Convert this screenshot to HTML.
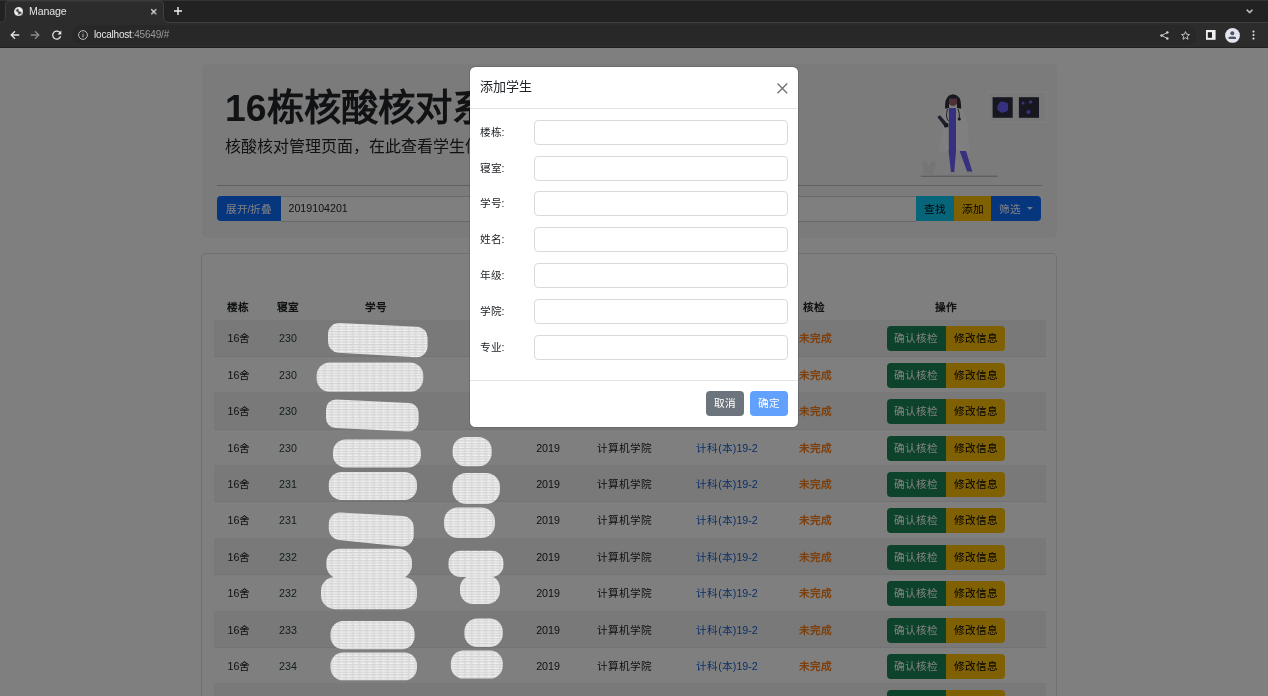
<!DOCTYPE html>
<html lang="zh-CN">
<head>
<meta charset="utf-8">
<style>
*{box-sizing:border-box;margin:0;padding:0}
html,body{width:1268px;height:696px;overflow:hidden;background:#fff;font-family:"Liberation Sans",sans-serif;color:#212529}
/* browser chrome */
#chrome{position:absolute;left:0;top:0;width:1268px;height:48px;background:#222222}
#tabtop{position:absolute;left:0;top:0;width:1268px;height:1px;background:#333}
#stripline{position:absolute;left:0;top:22px;width:1268px;height:1px;background:#3a3a3a}
#toolbar{position:absolute;left:0;top:23px;width:1268px;height:24px;background:#2c2c2c}
#tbline{position:absolute;left:0;top:47px;width:1268px;height:1px;background:#202020}
#omni{position:absolute;left:72px;top:25px;width:1124px;height:20px;border-radius:10px;background:#282828}
.ctext{position:absolute;font-size:11px;color:#e3e3e3;white-space:nowrap}
svg{position:absolute;overflow:visible}
body *{will-change:transform}
/* page */
#page{position:absolute;left:0;top:48px;width:1268px;height:648px;background:#fff;overflow:hidden}
#jumbo{position:absolute;left:201.5px;top:16px;width:854.5px;height:174px;background:#f6f6f6;border-radius:5px}
#h1{position:absolute;left:225px;top:38px;font-size:37.33px;font-weight:bold;line-height:1.2;white-space:nowrap;color:#212529}
#lead{position:absolute;left:225px;top:87px;font-size:16px;line-height:1.5;white-space:nowrap;color:#212529}
#hr{position:absolute;left:217px;top:137px;width:825px;height:1px;background:#bfc0c1}
.btn{position:absolute;font-size:10.67px;line-height:26.6px;text-align:center;white-space:nowrap}
#ig-input{position:absolute;left:281px;top:148px;width:635px;height:26px;border-top:1px solid #ced4da;border-bottom:1px solid #ced4da;background:#fff;font-size:10.67px;line-height:23px;padding-left:7.5px;color:#212529}
#card{position:absolute;left:201px;top:205px;width:856px;height:520px;border:1px solid #e0e0e0;border-radius:4px}
.th{position:absolute;top:251px;width:100px;text-align:center;font-size:10.67px;font-weight:bold;line-height:16px;color:#212529}
.tr{position:absolute;left:213.5px;width:832px;border-bottom:1px solid rgba(0,0,0,.05)}
.td{position:absolute;top:9.8px;width:100px;text-align:center;font-size:10.67px;line-height:16px;color:#212529;white-space:nowrap}
.lnk{color:#1660d0}
.room{color:#243f38}
.ora{color:#fd7e14;font-weight:bold}
.bgr,.byl{position:absolute;top:6px;height:25.2px;font-size:10.67px;line-height:25.2px;text-align:center;white-space:nowrap}
.bgr{left:673.4px;width:58.7px;background:#198754;color:#fff;border-radius:4px 0 0 4px}
.byl{left:732.1px;width:59.4px;background:#ffc107;color:#000;border-radius:0 4px 4px 0}
/* overlay */
#overlay{position:absolute;left:0;top:48px;width:1268px;height:648px;background:rgba(0,0,0,.5)}
.blob{position:absolute;background:#dadada;background-image:repeating-linear-gradient(0deg,#f2f2f2 0px,#f2f2f2 1.2px,#b8b8b8 1.6px,#e2e2e2 2.2px,#f2f2f2 2.6px)}
#modal{position:absolute;left:470px;top:67px;width:328px;height:360px;background:#fff;border-radius:5.3px;box-shadow:0 0 0 1px rgba(0,0,0,.12)}
#mtitle{position:absolute;left:480.3px;top:77px;font-size:13px;line-height:20px;color:#212529;white-space:nowrap}
#mhline{position:absolute;left:470px;top:107.5px;width:328px;height:1px;background:#e3e6e9}
#mfline{position:absolute;left:470px;top:380px;width:328px;height:1px;background:#e3e6e9}
.flab{position:absolute;left:479.7px;letter-spacing:-0.3px;height:25px;line-height:25px;font-size:10.67px;color:#212529;white-space:nowrap}
.finp{position:absolute;left:534px;width:254px;height:25.4px;border:1px solid #dadada;border-radius:4px;background:#fff}
.mbtn{position:absolute;top:391.3px;width:38px;height:25px;border-radius:4px;color:#fff;font-size:10.67px;line-height:25px;text-align:center}
</style>
</head>
<body>
<div id="chrome">
  <div id="tabtop"></div>
  
  <div id="toolbar"></div>
  <svg style="left:0;top:0" width="1268" height="24" viewBox="0 0 1268 24"><path d="M-1 24 L-1 22.5 Q5.4 22.5 5.4 17 L5.4 5.5 Q5.4 0.8 10 0.8 L159 0.8 Q163.5 0.8 163.5 5.5 L163.5 17 Q163.5 22.5 169.5 22.5 L1269 22.5 L1269 24 Z" fill="#2c2c2c"/><path d="M-1 22.5 Q5.4 22.5 5.4 17 L5.4 5.5 Q5.4 0.8 10 0.8 L159 0.8 Q163.5 0.8 163.5 5.5 L163.5 17 Q163.5 22.5 169.5 22.5 L1269 22.5" fill="none" stroke="#434343" stroke-width="0.9"/></svg>
  <div id="tbline"></div>
  <div id="omni"></div>
  <!-- favicon globe -->
  <svg style="left:13.7px;top:6.8px" width="9.2" height="9.2" viewBox="0 0 10 10"><circle cx="5" cy="5" r="4.9" fill="#f2f2f2"/><path d="M1.6 4.0 Q2.6 2.4 4.4 2.0 L5.2 2.6 Q4.4 3.2 4.6 4.2 Q5.6 4.6 6.4 5.0 L8.2 5.8 Q8.6 7.0 7.6 7.8 L6.2 7.0 Q5.4 7.6 5.6 8.8 L4.6 8.6 Q4.2 7.4 4.8 6.4 Q3.6 5.4 2.8 4.6 Z" fill="#2c2c2c"/></svg>
  <div class="ctext" style="left:29.3px;top:5px;font-size:10.6px;letter-spacing:-0.15px">Manage</div>
  <!-- tab close -->
  <svg style="left:150.6px;top:8.5px" width="5.4" height="5.4" viewBox="0 0 6 6"><path d="M0.3 0.3 L5.7 5.7 M5.7 0.3 L0.3 5.7" stroke="#e8e8e8" stroke-width="1.3"/></svg>
  <!-- new tab + -->
  <svg style="left:174px;top:7px" width="8" height="8" viewBox="0 0 8 8"><path d="M4 0 V8 M0 4 H8" stroke="#f0f0f0" stroke-width="1.4"/></svg>
  <!-- chevron -->
  <svg style="left:1245.9px;top:8.8px" width="7.2" height="4.4" viewBox="0 0 8 5"><path d="M0.7 0.7 L4 4 L7.3 0.7" fill="none" stroke="#e8e8e8" stroke-width="1.45"/></svg>
  <!-- back -->
  <svg style="left:10px;top:30px" width="10" height="10" viewBox="0 0 10 10"><path d="M9.2 5 H1.4 M5 1.2 L1.2 5 L5 8.8" fill="none" stroke="#e3e3e3" stroke-width="1.3"/></svg>
  <!-- forward -->
  <svg style="left:30px;top:30px" width="10" height="10" viewBox="0 0 10 10"><path d="M0.8 5 H8.6 M5 1.2 L8.8 5 L5 8.8" fill="none" stroke="#8a8a8a" stroke-width="1.3"/></svg>
  <!-- reload -->
  <svg style="left:52px;top:30px" width="10" height="10" viewBox="0 0 10 10"><path d="M8.3 3.2 A4 4 0 1 0 8.6 6.2" fill="none" stroke="#e3e3e3" stroke-width="1.3"/><path d="M9.3 0.6 V4.4 H5.5 Z" fill="#e3e3e3"/></svg>
  <!-- info -->
  <svg style="left:78.3px;top:30.2px" width="10" height="10" viewBox="0 0 10 10"><circle cx="5" cy="5" r="4.4" fill="none" stroke="#c8c8c8" stroke-width="0.9"/><path d="M5 2.6 V3.3 M5 4.1 V7.4" stroke="#c8c8c8" stroke-width="0.9"/></svg>
  <div class="ctext" style="left:94px;top:29.4px;font-size:10px;letter-spacing:-0.2px"><span style="color:#e8e8e8">localhost</span><span style="color:#9a9a9a">:45649/#</span></div>
  <!-- share -->
  <svg style="left:1159.8px;top:30.7px" width="9" height="9" viewBox="0 0 9 9"><path d="M7.2 1.6 L1.8 4.5 L7.2 7.4" fill="none" stroke="#d0d0d0" stroke-width="0.9"/><circle cx="7.3" cy="1.5" r="1.3" fill="#d0d0d0"/><circle cx="1.6" cy="4.5" r="1.3" fill="#d0d0d0"/><circle cx="7.3" cy="7.5" r="1.3" fill="#d0d0d0"/></svg>
  <!-- star -->
  <svg style="left:1180.5px;top:30.5px" width="9" height="9" viewBox="0 0 9 9"><path d="M4.5 0.6 L5.6 3.3 L8.5 3.5 L6.3 5.4 L7 8.3 L4.5 6.7 L2 8.3 L2.7 5.4 L0.5 3.5 L3.4 3.3 Z" fill="none" stroke="#d0d0d0" stroke-width="0.9" stroke-linejoin="round"/></svg>
  <!-- side panel -->
  <svg style="left:1206.4px;top:30px" width="9.6" height="9.8" viewBox="0 0 9.6 9.8"><rect x="0" y="0" width="9.6" height="9.8" fill="#f0f0f0"/><rect x="1.8" y="2.2" width="4.2" height="5.6" fill="#202020"/></svg>
  <!-- profile -->
  <svg style="left:1224.9px;top:27.6px" width="15" height="15" viewBox="0 0 15 15"><circle cx="7.5" cy="7.4" r="7.4" fill="#e3e6ee"/><circle cx="7.3" cy="5.3" r="2.0" fill="#4b5563"/><path d="M3.6 10.9 L3.6 9.6 Q3.8 8.5 7.3 8.5 Q10.8 8.5 11 9.6 L11 10.9 Z" fill="#4b5563"/></svg>
  <!-- menu dots -->
  <svg style="left:1252.2px;top:30px" width="3" height="11" viewBox="0 0 3 11"><circle cx="1.5" cy="1.6" r="1.05" fill="#e3e3e3"/><circle cx="1.5" cy="5" r="1.05" fill="#e3e3e3"/><circle cx="1.5" cy="8.6" r="1.05" fill="#e3e3e3"/></svg>
</div>
<div id="page">
  <div id="jumbo"></div>
  <div id="h1">16栋核酸核对系统</div>
  <div id="lead">核酸核对管理页面，在此查看学生信息</div>
  <!-- illustration -->
  <svg style="left:919px;top:42px" width="130" height="90" viewBox="0 0 130 90">
    <rect x="1.8" y="85.7" width="76.8" height="1" fill="#a8a8a8"/>
    <rect x="67.9" y="1.5" width="60.3" height="31.1" fill="#fdfdfd"/>
    <rect x="69.4" y="3" width="57.3" height="28.1" fill="#f3f3f3"/>
    <rect x="73.6" y="7.2" width="20.1" height="20.6" fill="#2f2e41"/>
    <rect x="99.9" y="7.2" width="20.1" height="20.6" fill="#2f2e41"/>
    <path d="M79 15 q2 -5 6 -3 q5 0 4 5 q1 4 -3 5 q-4 2 -6 -1 q-3 -2 -1 -6z" fill="#6c63ff"/>
    <circle cx="104" cy="13" r="1.5" fill="#6c63ff"/><circle cx="111.5" cy="12" r="1.8" fill="#6c63ff"/><circle cx="109.5" cy="22" r="2" fill="#6c63ff"/>
    <!-- plant -->
    <path d="M5.5 85.5 L4 77 Q2.5 71 6 70 Q9 73 9.5 76 Q12 70 16.5 71 Q17 78 14.5 80 L14 85.5 Z" fill="#ebebeb"/>
    <!-- coat -->
    <path d="M27 18.5 Q33 16.5 40.5 18.5 Q46 21 48 30 Q51 36 48.5 40 L50.6 61.8 L19.7 61.8 L24 38 Q22 32 24 24 Z" fill="#ffffff"/>
    <!-- legs -->
    <path d="M29.6 61 L37 61 L35.2 82.6 L32 82.6 Z" fill="#6c63ff"/>
    <path d="M40.6 61 L47 61 L53.5 82 L48.5 82.4 Z" fill="#6c63ff"/>
    <path d="M31 82 L36 82 L36.5 85 L30.5 85 Z M48 81.5 L53.5 81.5 L55 85 L48.5 85 Z" fill="#f0f0f0"/>
    <!-- scrubs stripe -->
    <path d="M29.8 18 L37 18 L37 62.5 L29.8 62.5 Z" fill="#6c63ff"/>
    <!-- hair -->
    <path d="M26.2 18.7 Q25 5 34 4.3 Q43 5 42 18.7 L38 18 L38 12 L30 12 L30 18 Z" fill="#2f2e41"/>
    <path d="M30 8.5 L38 8.5 L38 14 Q34 18 30 14 Z" fill="#a0616a"/>
    <!-- stethoscope -->
    <path d="M28.5 19 Q26 27 29.5 31 M39 19 Q41 24 40.3 28" fill="none" stroke="#2f2e41" stroke-width="0.9"/>
    <circle cx="40.3" cy="29" r="1.6" fill="#2f2e41"/>
    <!-- clipboard -->
    <path d="M18.3 27 L21 25.2 L29 34.5 L26.5 37.4 Z" fill="#3f3d56"/>
    <path d="M24.5 34 L29 33 L29.5 37 L25.5 37.4 Z" fill="#2f2e41"/>
  </svg>
  <div id="hr"></div>
  <div class="btn" style="left:217px;top:148px;width:64px;height:25px;background:#0d6efd;color:#fff;border-radius:4px 0 0 4px">展开/折叠</div>
  <div id="ig-input">2019104201</div>
  <div class="btn" style="left:916px;top:148px;width:38px;height:25px;background:#0dcaf0;color:#000">查找</div>
  <div class="btn" style="left:954px;top:148px;width:37px;height:25px;background:#ffc107;color:#000">添加</div>
  <div class="btn" style="left:991px;top:148px;width:50px;height:25px;background:#0d6efd;color:#fff;border-radius:0 4px 4px 0;padding-right:12px">筛选</div>
  <svg style="left:1026.9px;top:159px" width="5.7" height="2.8" viewBox="0 0 6 3"><path d="M0 0 H6 L3 3 Z" fill="#fff"/></svg>
  <div id="card"></div>
  <div class="th" style="left:188px">楼栋</div>
  <div class="th" style="left:237.8px">寝室</div>
  <div class="th" style="left:326px">学号</div>
  <div class="th" style="left:440px">姓名</div>
  <div class="th" style="left:497.7px">年级</div>
  <div class="th" style="left:573px">学院</div>
  <div class="th" style="left:676.7px">专业</div>
  <div class="th" style="left:764px">核检</div>
  <div class="th" style="left:896px">操作</div>
<div class="tr" style="top:272px;height:37px;background:rgba(0,0,0,.05);"><span class="td" style="left:-25.5px">16舍</span><span class="td room" style="left:24.3px">230</span><span class="td" style="left:284.2px">2019</span><span class="td" style="left:359.5px">计算机学院</span><span class="td lnk" style="left:463.2px">计科(本)19-2</span><span class="td ora" style="left:550.5px">未完成</span><span class="bgr">确认核检</span><span class="byl">修改信息</span></div>
<div class="tr" style="top:309px;height:36px;"><span class="td" style="left:-25.5px">16舍</span><span class="td room" style="left:24.3px">230</span><span class="td" style="left:284.2px">2019</span><span class="td" style="left:359.5px">计算机学院</span><span class="td lnk" style="left:463.2px">计科(本)19-2</span><span class="td ora" style="left:550.5px">未完成</span><span class="bgr">确认核检</span><span class="byl">修改信息</span></div>
<div class="tr" style="top:345px;height:37px;background:rgba(0,0,0,.05);"><span class="td" style="left:-25.5px">16舍</span><span class="td room" style="left:24.3px">230</span><span class="td" style="left:284.2px">2019</span><span class="td" style="left:359.5px">计算机学院</span><span class="td lnk" style="left:463.2px">计科(本)19-2</span><span class="td ora" style="left:550.5px">未完成</span><span class="bgr">确认核检</span><span class="byl">修改信息</span></div>
<div class="tr" style="top:382px;height:36px;"><span class="td" style="left:-25.5px">16舍</span><span class="td room" style="left:24.3px">230</span><span class="td" style="left:284.2px">2019</span><span class="td" style="left:359.5px">计算机学院</span><span class="td lnk" style="left:463.2px">计科(本)19-2</span><span class="td ora" style="left:550.5px">未完成</span><span class="bgr">确认核检</span><span class="byl">修改信息</span></div>
<div class="tr" style="top:418px;height:36px;background:rgba(0,0,0,.05);"><span class="td" style="left:-25.5px">16舍</span><span class="td room" style="left:24.3px">231</span><span class="td" style="left:284.2px">2019</span><span class="td" style="left:359.5px">计算机学院</span><span class="td lnk" style="left:463.2px">计科(本)19-2</span><span class="td ora" style="left:550.5px">未完成</span><span class="bgr">确认核检</span><span class="byl">修改信息</span></div>
<div class="tr" style="top:454px;height:37px;"><span class="td" style="left:-25.5px">16舍</span><span class="td room" style="left:24.3px">231</span><span class="td" style="left:284.2px">2019</span><span class="td" style="left:359.5px">计算机学院</span><span class="td lnk" style="left:463.2px">计科(本)19-2</span><span class="td ora" style="left:550.5px">未完成</span><span class="bgr">确认核检</span><span class="byl">修改信息</span></div>
<div class="tr" style="top:491px;height:36px;background:rgba(0,0,0,.05);"><span class="td" style="left:-25.5px">16舍</span><span class="td room" style="left:24.3px">232</span><span class="td" style="left:284.2px">2019</span><span class="td" style="left:359.5px">计算机学院</span><span class="td lnk" style="left:463.2px">计科(本)19-2</span><span class="td ora" style="left:550.5px">未完成</span><span class="bgr">确认核检</span><span class="byl">修改信息</span></div>
<div class="tr" style="top:527px;height:37px;"><span class="td" style="left:-25.5px">16舍</span><span class="td room" style="left:24.3px">232</span><span class="td" style="left:284.2px">2019</span><span class="td" style="left:359.5px">计算机学院</span><span class="td lnk" style="left:463.2px">计科(本)19-2</span><span class="td ora" style="left:550.5px">未完成</span><span class="bgr">确认核检</span><span class="byl">修改信息</span></div>
<div class="tr" style="top:564px;height:36px;background:rgba(0,0,0,.05);"><span class="td" style="left:-25.5px">16舍</span><span class="td room" style="left:24.3px">233</span><span class="td" style="left:284.2px">2019</span><span class="td" style="left:359.5px">计算机学院</span><span class="td lnk" style="left:463.2px">计科(本)19-2</span><span class="td ora" style="left:550.5px">未完成</span><span class="bgr">确认核检</span><span class="byl">修改信息</span></div>
<div class="tr" style="top:600px;height:36px;"><span class="td" style="left:-25.5px">16舍</span><span class="td room" style="left:24.3px">234</span><span class="td" style="left:284.2px">2019</span><span class="td" style="left:359.5px">计算机学院</span><span class="td lnk" style="left:463.2px">计科(本)19-2</span><span class="td ora" style="left:550.5px">未完成</span><span class="bgr">确认核检</span><span class="byl">修改信息</span></div>
<div class="tr" style="top:636px;height:37px;background:rgba(0,0,0,.05);"><span class="td" style="left:-25.5px">16舍</span><span class="td room" style="left:24.3px">235</span><span class="td" style="left:284.2px">2019</span><span class="td" style="left:359.5px">计算机学院</span><span class="td lnk" style="left:463.2px">计科(本)19-2</span><span class="td ora" style="left:550.5px">未完成</span><span class="bgr">确认核检</span><span class="byl">修改信息</span></div>
</div>
<div id="overlay"></div>
<svg style="left:0;top:0" width="1268" height="696" viewBox="0 0 1268 696"><defs><pattern id="stp" patternUnits="userSpaceOnUse" width="7" height="2.6"><rect width="7" height="2.6" fill="#f0f0f0"/><rect y="1.3" width="7" height="0.7" fill="#b9b9b9"/><rect x="2" y="0.2" width="1.5" height="0.6" fill="#d0d0d0"/><rect x="5" y="2.0" width="1.2" height="0.5" fill="#fbfbfb"/></pattern></defs><g fill="url(#stp)">
<rect x="316.6" y="362.5" width="106.7" height="29.3" rx="13.2"/>
<rect x="333.0" y="439.4" width="87.9" height="28.1" rx="12.6"/>
<rect x="452.6" y="437.0" width="39.1" height="29.3" rx="13.2"/>
<rect x="328.8" y="471.9" width="88.2" height="28.1" rx="12.6"/>
<rect x="452.5" y="472.9" width="47.5" height="31.1" rx="14.0"/>
<rect x="444.0" y="507.5" width="51.0" height="30.5" rx="13.7"/>
<rect x="326.4" y="548.8" width="85.5" height="29.8" rx="13.4"/>
<rect x="448.5" y="550.8" width="54.9" height="26.2" rx="11.8"/>
<rect x="321.0" y="577.0" width="96.0" height="32.2" rx="14.0"/>
<rect x="460.0" y="575.3" width="40.0" height="28.7" rx="12.9"/>
<rect x="330.5" y="621.0" width="84.1" height="28.2" rx="12.7"/>
<rect x="464.4" y="618.6" width="38.3" height="28.5" rx="12.8"/>
<rect x="330.5" y="652.5" width="86.5" height="27.8" rx="12.5"/>
<rect x="450.8" y="650.5" width="51.9" height="28.1" rx="12.6"/>
<path d="M339.0 334.0 L416.6 337.7 L416.6 346.2 L339.0 341.7 Z" stroke="url(#stp)" stroke-width="22" stroke-linejoin="round"/>
<path d="M336.0 409.4 L408.6 413.0 L408.6 421.5 L336.0 418.0 Z" stroke="url(#stp)" stroke-width="20" stroke-linejoin="round"/>
<path d="M339.8 523.5 L402.7 527.0 L402.7 535.5 L339.8 529.0 Z" stroke="url(#stp)" stroke-width="22" stroke-linejoin="round"/>
</g></svg>
<div id="modal"></div>
<div id="mtitle">添加学生</div>
<svg style="left:777.2px;top:82.6px" width="10.7" height="10.7" viewBox="0 0 10.7 10.7"><path d="M0.5 0.5 L10.2 10.2 M10.2 0.5 L0.5 10.2" stroke="#707070" stroke-width="1.3"/></svg>
<div id="mhline"></div>
<div class="flab" style="top:119.70px">楼栋:</div><div class="finp" style="top:119.70px"></div>
<div class="flab" style="top:155.57px">寝室:</div><div class="finp" style="top:155.57px"></div>
<div class="flab" style="top:191.44px">学号:</div><div class="finp" style="top:191.44px"></div>
<div class="flab" style="top:227.31px">姓名:</div><div class="finp" style="top:227.31px"></div>
<div class="flab" style="top:263.18px">年级:</div><div class="finp" style="top:263.18px"></div>
<div class="flab" style="top:299.05px">学院:</div><div class="finp" style="top:299.05px"></div>
<div class="flab" style="top:334.92px">专业:</div><div class="finp" style="top:334.92px"></div>
<div id="mfline"></div>
<div class="mbtn" style="left:706.1px;background:#6c757d">取消</div>
<div class="mbtn" style="left:749.8px;background:#61a1fd">确定</div>
</body>
</html>
